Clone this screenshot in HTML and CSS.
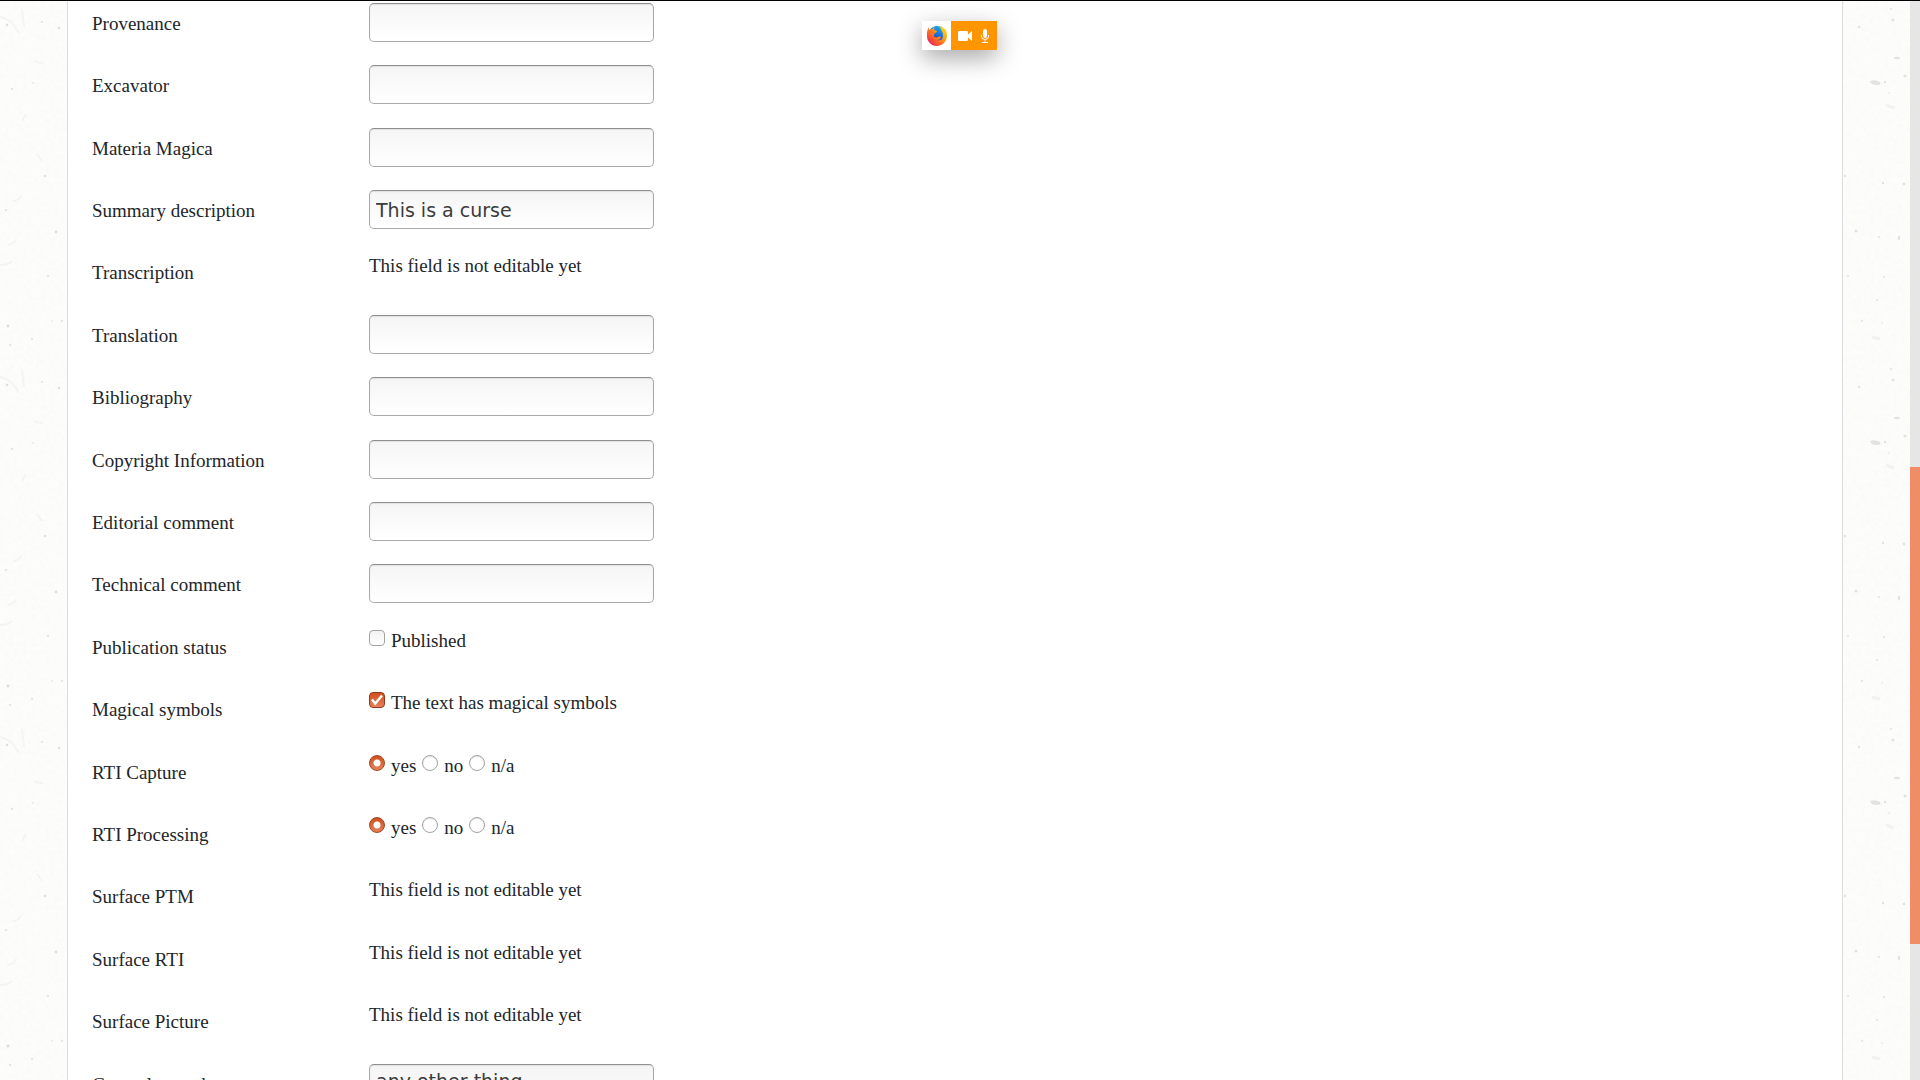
FILE: index.html
```html
<!DOCTYPE html>
<html lang="en">
<head>
<meta charset="utf-8">
<title>Edit record</title>
<link rel="stylesheet" href="styles.css">
</head>
<body>
<svg class="defs" width="0" height="0" aria-hidden="true">
  <defs>
    <filter id="grain" x="0" y="0" width="100%" height="100%">
      <feTurbulence type="fractalNoise" baseFrequency="0.22" numOctaves="3" seed="4"/>
      <feColorMatrix values="0 0 0 0 0.5  0 0 0 0 0.5  0 0 0 0 0.45  0.08 0 0 0 -0.022"/>
    </filter>
    <filter id="soft"><feGaussianBlur stdDeviation="0.6"/></filter>
    <pattern id="specks-left" width="67" height="360" patternUnits="userSpaceOnUse">
      <g fill="#dededb" filter="url(#soft)">
        <circle cx="7" cy="24" r="1.2"/><circle cx="59" cy="27" r="1.3"/><circle cx="42" cy="21" r="1"/>
        <circle cx="12" cy="88" r="1.1"/><circle cx="33" cy="82" r=".8"/><circle cx="45" cy="175" r="1.2"/>
        <circle cx="6" cy="209" r="1"/><circle cx="56" cy="231" r="1.4"/><circle cx="48" cy="275" r="1"/>
        <circle cx="8" cy="325" r="1.6"/><circle cx="62" cy="320" r="1"/><circle cx="10" cy="344" r="1"/>
        <circle cx="32" cy="338" r="1"/><circle cx="52" cy="320" r=".8"/>
      </g>
      <g fill="none" stroke="#f4f4f2" stroke-width="2" filter="url(#soft)">
        <path d="M0 16Q12 18 19 32M22 120l4-7M37 153l5 7M13 200q6 0 8-6M0 264q8 0 12-4M8 244q6-1 8-6M34 60q4 2 9 2M22 8l2 18"/>
      </g>
    </pattern>
    <pattern id="specks-right" width="67" height="360" patternUnits="userSpaceOnUse">
      <g fill="#e2e2df" filter="url(#soft)">
        <circle cx="50" cy="19" r="1.5"/><circle cx="48" cy="8" r="1"/><circle cx="16" cy="26" r="1.3"/>
        <ellipse cx="54" cy="57" rx="3" ry="1.2"/><circle cx="62" cy="75" r="1.6"/>
        <path d="M27 80q5-2 10 1q2 3-3 3q-6 0-7-4"/><circle cx="42" cy="81" r="1.2"/><circle cx="46" cy="92" r=".8"/>
        <circle cx="2" cy="175" r="1.2"/><circle cx="40" cy="182" r="1.2"/><circle cx="61" cy="183" r="1.4"/>
        <circle cx="13" cy="230" r="1.5"/><circle cx="36" cy="236" r="1"/><ellipse cx="56" cy="237" rx="1.2" ry="2.4"/>
        <circle cx="5" cy="275" r="1"/><circle cx="41" cy="276" r="1"/><circle cx="34" cy="299" r="1"/>
        <circle cx="19" cy="320" r="1.1"/><circle cx="39" cy="322" r=".8"/>
      </g>
      <g fill="none" stroke="#f2f2f0" stroke-width="3" filter="url(#soft)">
        <path d="M43 104l8 3M29 336l8 2"/>
      </g>
    </pattern>
  </defs>
</svg>

<div class="viewport">
  <svg class="gutter" aria-hidden="true"><rect width="100%" height="100%" filter="url(#grain)"/><rect width="100%" height="100%" fill="url(#specks-left)"/></svg>

  <main class="sheet">
    <form class="record">
      <div class="row"><label class="name" for="provenance">Provenance</label><input class="field" id="provenance" type="text"></div>
      <div class="row"><label class="name" for="excavator">Excavator</label><input class="field" id="excavator" type="text"></div>
      <div class="row"><label class="name" for="materia">Materia Magica</label><input class="field" id="materia" type="text"></div>
      <div class="row"><label class="name" for="summary">Summary description</label><input class="field" id="summary" type="text" value="This is a curse"></div>
      <div class="row"><span class="name">Transcription</span><span class="value">This field is not editable yet</span></div>
      <div class="row"><label class="name" for="translation">Translation</label><input class="field" id="translation" type="text"></div>
      <div class="row"><label class="name" for="bibliography">Bibliography</label><input class="field" id="bibliography" type="text"></div>
      <div class="row"><label class="name" for="copyright">Copyright Information</label><input class="field" id="copyright" type="text"></div>
      <div class="row"><label class="name" for="editorial">Editorial comment</label><input class="field" id="editorial" type="text"></div>
      <div class="row"><label class="name" for="technical">Technical comment</label><input class="field" id="technical" type="text"></div>
      <div class="row"><span class="name">Publication status</span>
        <div class="value"><label class="option"><input class="tick" type="checkbox">Published</label></div></div>
      <div class="row"><span class="name">Magical symbols</span>
        <div class="value"><label class="option"><input class="tick" type="checkbox" checked>The text has magical symbols</label></div></div>
      <div class="row" role="radiogroup" aria-labelledby="capture"><span class="name" id="capture">RTI Capture</span>
        <div class="value">
          <label class="option"><input class="dot" type="radio" name="capture" checked>yes</label>
          <label class="option"><input class="dot" type="radio" name="capture">no</label>
          <label class="option"><input class="dot" type="radio" name="capture">n/a</label>
        </div></div>
      <div class="row" role="radiogroup" aria-labelledby="processing"><span class="name" id="processing">RTI Processing</span>
        <div class="value">
          <label class="option"><input class="dot" type="radio" name="processing" checked>yes</label>
          <label class="option"><input class="dot" type="radio" name="processing">no</label>
          <label class="option"><input class="dot" type="radio" name="processing">n/a</label>
        </div></div>
      <div class="row"><span class="name">Surface PTM</span><span class="value">This field is not editable yet</span></div>
      <div class="row"><span class="name">Surface RTI</span><span class="value">This field is not editable yet</span></div>
      <div class="row"><span class="name">Surface Picture</span><span class="value">This field is not editable yet</span></div>
      <div class="row"><label class="name" for="remarks">General remarks</label><textarea class="field remarks" id="remarks" rows="2">any other thing</textarea></div>
    </form>
  </main>

  <svg class="gutter" aria-hidden="true"><rect width="100%" height="100%" filter="url(#grain)"/><rect width="100%" height="100%" fill="url(#specks-right)"/></svg>

  <div class="scrollbar"><div class="thumb"></div></div>
</div>

<div class="sharing">
  <svg class="fox" viewBox="0 0 29 29" aria-hidden="true">
    <defs>
      <linearGradient id="flame" x1="1" y1="0" x2="0.1" y2="0.9"><stop offset="0" stop-color="#ffee1a"/><stop offset=".4" stop-color="#ffa51a"/><stop offset=".75" stop-color="#ff5a2a"/><stop offset="1" stop-color="#e01f6a"/></linearGradient>
      <linearGradient id="globe" x1="0.7" y1="0" x2="0.2" y2="1"><stop offset="0" stop-color="#12b4f2"/><stop offset=".6" stop-color="#1b61cf"/><stop offset="1" stop-color="#322a80"/></linearGradient>
    </defs>
    <circle cx="15" cy="13" r="8" fill="url(#globe)"/>
    <path fill="url(#flame)" d="M7 6Q6.500 8 7.500 9Q9 7.500 10.500 8Q11 6.500 12.500 6Q11.800 7.500 12.500 9L15 10Q15 11.500 12.500 12.500Q11 14.500 12.500 16Q14.500 17 17 15.500Q18.500 15 19 16.500Q17.500 19.500 14.500 19Q20 20.500 21 15.500Q21.500 12 19.500 9.500Q17.500 7 18.500 4.500Q20.500 5.500 21.800 8.500L23 7.500Q25.500 11 25 15.500C24 21.500 20 25 15 25C9 25 5 20.500 5 15Q4.500 9.500 7 6Z"/>
  </svg>
  <div class="devices">
    <svg class="device" viewBox="0 0 14 14" aria-hidden="true"><path fill="#fff" d="M1 2h8q1 0 1 1v2.500L14 2v10l-4-3.500V11q0 1-1 1H1q-1 0-1-1V3q0-1 1-1Z"/></svg>
    <svg class="device" viewBox="0 0 14 14" aria-hidden="true"><rect x="5" y="0" width="4" height="9" rx="2" fill="#fff"/><path fill="none" stroke="#fff" d="M3.500 6v1.500a3.500 3 0 0 0 7 0V6M7 10.500V13M4 13.500h6"/></svg>
  </div>
</div>
</body>
</html>
```
FILE: styles.css
```css
* {
  box-sizing: border-box;
}

body {
  margin: 0;
  background: #fdfdfb;
  color: #212529;
  font: 19px/28px "Liberation Serif", "Times New Roman", serif;
}

.defs {
  position: absolute;
}

.viewport {
  display: flex;
  height: 100vh;
  overflow: hidden;
  border-top: 1px solid #000;
}

.gutter {
  width: 67px;
  height: 100%;
  flex: none;
}

.sheet {
  flex: 1;
  padding: 2px 24px 0;
  background: #fff;
  border: solid #dcdcdc;
  border-width: 0 1px;
}

/* Rows follow a 62.4px rhythm, kept on whole pixels. */
.record {
  display: grid;
  grid-auto-rows: 62px 63px 62px 62px 63px;
}

.row {
  display: grid;
  grid-template-columns: 277px 1fr;
  align-items: start;
}

.name {
  padding-top: 7px;
}

.value {
  display: flex;
  gap: 6px;
}

.option {
  display: flex;
  gap: 6px;
}

.field {
  width: 285px;
  height: 39px;
  padding: 0 6px;
  border: 1px solid #a9a9a9;
  border-top-color: #8f8f8f;
  border-radius: 5px;
  background: linear-gradient(#f5f5f5, #fff);
  box-shadow: inset 0 1px 1px #e2e2e2;
  color: #3c3c3c;
  font: 19px/28px "DejaVu Sans", sans-serif;
}

.remarks {
  display: block;
  height: 64px;
  padding-top: 2px;
  resize: none;
}

.tick,
.dot {
  appearance: none;
  width: 16px;
  height: 16px;
  margin: 3px 0 0;
  border: 1px solid #a3a3a3;
  background: linear-gradient(#f2f2f2, #fff);
}

.tick {
  border-radius: 4px;
}

.dot {
  border-radius: 50%;
  background: #fff;
  box-shadow: inset 0 1px 1px #e2e2e2;
}

.tick:checked {
  border-color: #8f3b1b;
  background:
    url("data:image/svg+xml,%3Csvg xmlns='http://www.w3.org/2000/svg' viewBox='0 0 14 14'%3E%3Cpath d='M2 6.500l3.200 4L12 2.500' fill='none' stroke='white' stroke-width='2.400'/%3E%3C/svg%3E"),
    linear-gradient(#cf4f1f, #e58259);
}

.dot:checked {
  border-color: #a04624;
  background:
    radial-gradient(circle, #fff 3px, transparent 4px),
    linear-gradient(#cf4f1f, #e58259);
  box-shadow: none;
}

.scrollbar {
  width: 10px;
  flex: none;
  padding-top: 466px;
  background: #e6e6e6;
}

.thumb {
  height: 477px;
  background: #f08d66;
}

.sharing {
  position: fixed;
  top: 21px;
  left: calc(50% - 38px);
  display: flex;
  background: #fff;
  box-shadow: 0 8px 24px rgba(0, 0, 0, 0.35);
}

.fox {
  width: 29px;
  height: 29px;
}

.devices {
  display: flex;
  align-items: center;
  gap: 6px;
  padding: 0 5px 0 7px;
  background: #ff9500;
}

.device {
  width: 14px;
  height: 14px;
}
```
